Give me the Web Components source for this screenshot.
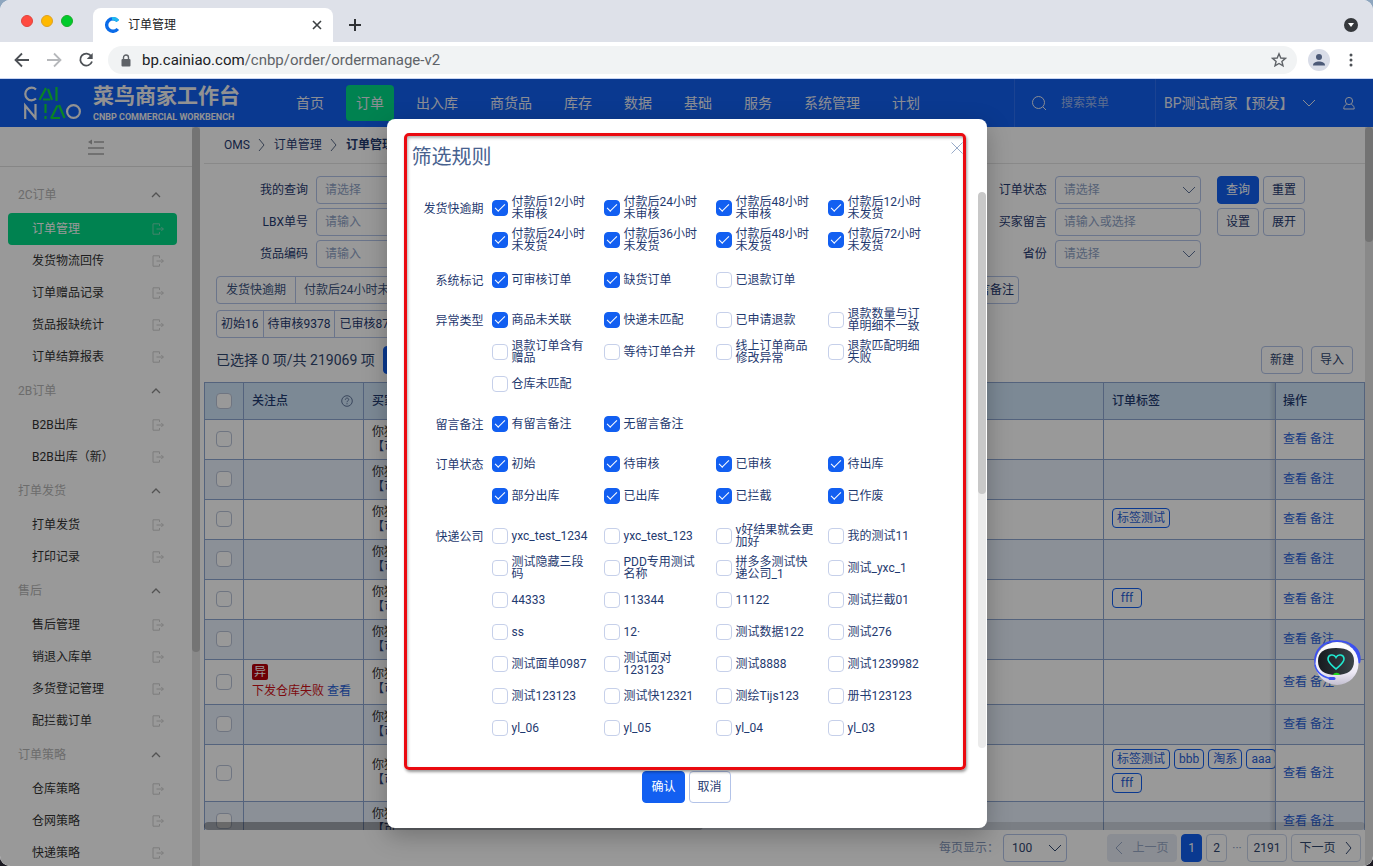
<!DOCTYPE html>
<html lang="zh-CN">
<head>
<meta charset="utf-8">
<title>订单管理</title>
<style>
  html, body { margin: 0; height: 100%; }
  body {
    font: 12px/16px Roboto, "Noto Sans CJK SC", sans-serif;
    color: #1f3a70; overflow: hidden;
    background: linear-gradient(#8ea6bf, #1c1a22);
    --blue: #125ff1; --green: #00d985; --line: #b3c3e8; --grid: #8da6d0;
  }
</style>
</head>
<body>
<browser-window>
  <top-nav></top-nav>
  <side-menu></side-menu>
  <order-page></order-page>
  <filter-dialog slot="overlay"></filter-dialog>
  <help-robot slot="overlay"></help-robot>
</browser-window>

<script>
const BASE = `
  *, *::before { box-sizing: border-box; }
  a { color: inherit; text-decoration: none; }
  button, input, select { font: inherit; color: inherit; margin: 0; }
  button { background: none; border: 0; padding: 0; }
  svg { display: block; fill: none; flex: none; }
`;
function define(name, render) {
  customElements.define(name, class extends HTMLElement {
    connectedCallback() {
      if (this.shadowRoot) return;
      const t = document.createElement('template');
      t.innerHTML = render(this);
      const root = this.attachShadow({ mode: 'open' });
      const base = document.createElement('style');
      base.textContent = BASE;
      root.append(base, t.content.cloneNode(true));
    }
  });
}

/* ---------- line icons ---------- */
const ICONS = {
  down: [14, 14, '<path d="M1 4l6 6 6-6"/>'],
  up: [10, 10, '<path d="M1 7l4-4 4 4" stroke-width="1.3"/>'],
  right: [8, 14, '<path d="M1 1l5 6-5 6"/>'],
  left: [8, 14, '<path d="M7 1L1 7l6 6"/>'],
  search: [16, 16, '<circle cx="7.5" cy="7.5" r="6"/><path d="M12 12l3 3"/>'],
  user: [12, 14, '<circle cx="6" cy="5" r="3.6"/><path d="M3.6 8.4C1.4 9.4.8 10.8.8 13h10.4c0-2.2-.6-3.6-2.8-4.6"/>'],
  exit: [12, 12, '<path d="M7.5 3V.8H1v10.4h6.5V9M4.5 6h7M9.3 4l2 2-2 2"/>'],
  fold: [16, 16, '<path d="M6 3h10M0 9h16M0 15h16" stroke-width="1.4"/><path d="M0 3l4-2.500v5z" fill="currentColor" stroke="none"/>'],
  close: [12, 12, '<path d="M.5 .5l11 11M11.500 .5l-11 11"/>'],
  help: [12, 12, '<circle cx="6" cy="6" r="5.300"/><path d="M4.300 4.700C4.400 2.500 7.800 2.600 7.700 4.700 7.600 5.900 6 5.800 6 7.200M6 8.200v1.100"/>']
};
define('ui-icon', el => {
  const [w, h, body] = ICONS[el.getAttribute('name')];
  return `<style>:host{display:block;flex:none}</style>
    <svg width="${w}" height="${h}" viewBox="0 0 ${w} ${h}" stroke="currentColor" aria-hidden="true">${body}</svg>`;
});

define('ui-button', el => `
  <style>
    :host { display: block; flex: none; }
    button { display: flex; align-items: center; justify-content: center; height: 28px; min-width: 20px;
      padding: 0 8px; border: 1px solid var(--line); border-radius: 4px; white-space: nowrap; }
    :host([tall]) button { height: 32px; }
    :host([primary]) button { background: var(--blue); border-color: var(--blue); color: #fff; }
  </style>
  <button type="button"><slot></slot></button>`);

define('scroll-bar', el => `
  <style>
    :host { display: block; position: absolute; top: 0; bottom: 0; right: 0; width: 8px; background: var(--track, #e6e6e6); border-radius: var(--bar-radius, 0); overflow: hidden; }
    i { display: block; height: var(--thumb, 50%); background: var(--thumb-color, #c4c4c4); border-radius: 4px; }
    :host([across]) { top: auto; left: 0; width: auto; height: 8px; }
    :host([across]) i { height: 8px; width: var(--thumb, 50%); }
  </style><i></i>`);

/* ---------- browser frame ---------- */
define('browser-window', () => `
  <style>
    :host { display: flex; flex-direction: column; height: 100vh; border-radius: 10px; overflow: hidden; background: #fff; }
    .tabs { display: flex; align-items: center; height: 42px; background: #dee1e9; flex: none; padding: 8px 14px 0 21px; color: #3c4043; }
    .lights { display: flex; gap: 8px; width: 72px; padding-bottom: 8px; }
    .lights i { width: 12px; height: 12px; border-radius: 50%; background: #ff4a40; border: 1px solid #e0443e; }
    .lights i:nth-child(2) { background: #ffb900; border-color: #dea123; }
    .lights i:nth-child(3) { background: #00cb2c; border-color: #1aab29; }
    .tab { display: flex; align-items: center; align-self: flex-end; width: 240px; height: 34px; padding: 0 11px; background: #fff; border-radius: 8px 8px 0 0; }
    .tab span { flex: 1; padding-left: 8px; color: #202124; }
    .plus { margin-left: 15px; }
    .spacer { flex: 1; }
    .bar { display: flex; align-items: center; height: 37px; flex: none; padding: 0 14px; border-bottom: 1px solid #c9d5f2; color: #5f6368; }
    .bar > button { width: 16px; margin-right: 16px; }
    .omni { flex: 1; display: flex; align-items: center; height: 28px; margin-left: -2px; padding: 0 10px 0 13px; border-radius: 14px; background: #f1f3f4; font-size: 15px; margin-right: 11px; }
    .omni span { padding-left: 11px; flex: 1; }
    .omni b { font-weight: 400; color: #202124; }
    .menu { margin-left: 13px; }
    .app { position: relative; flex: 1; min-height: 0; display: grid; grid-template: 48px minmax(0, 1fr) / 200px minmax(0, 1fr); background: #fff; }
    ::slotted(top-nav) { grid-column: 1 / -1; }
  </style>
  <header class="tabs">
    <div class="lights"><i></i><i></i><i></i></div>
    <div class="tab">
      <svg width="16" height="16" viewBox="0 0 16 16"><path d="M13.800 4A6.300 6.300 0 1 0 13.800 12" stroke="#0a6be8" stroke-width="3.400"/><path d="M8 1.700A6.300 6.300 0 0 1 13.800 4" stroke="#20b8f0" stroke-width="3.400"/></svg>
      <span>订单管理</span>
      <button aria-label="关闭标签页"><svg width="10" height="10" viewBox="0 0 10 10" stroke="#3c4043" stroke-width="1.600"><path d="M1 1l8 8M9 1L1 9"/></svg></button>
    </div>
    <button class="plus" aria-label="新标签页"><svg width="14" height="14" viewBox="0 0 14 14" stroke="#303236" stroke-width="2"><path d="M7 1v12M1 7h12"/></svg></button>
    <div class="spacer"></div>
    <button aria-label="搜索标签页"><svg width="16" height="16" viewBox="0 0 16 16"><circle cx="8" cy="8" r="7" fill="#35383c"/><path d="M5 6h6l-3 4z" fill="#fff"/></svg></button>
  </header>
  <nav class="bar">
    <button aria-label="后退"><svg width="16" height="16" viewBox="0 0 16 16" stroke="#4d5156" stroke-width="1.800"><path d="M15 8H2M8 1.500L1.500 8 8 14.500"/></svg></button>
    <button aria-label="前进"><svg width="16" height="16" viewBox="0 0 16 16" stroke="#b6b8bb" stroke-width="1.800"><path d="M1 8h13M8 1.500L14.500 8 8 14.500"/></svg></button>
    <button aria-label="刷新"><svg width="16" height="16" viewBox="0 0 16 16"><path d="M13.300 4.300A6 6 0 1 0 14 9.500" stroke="#4d5156" stroke-width="1.800"/><path d="M14.700 1v6H8.800z" fill="#4d5156"/></svg></button>
    <div class="omni">
      <svg width="10" height="13" viewBox="0 0 10 13"><rect x=".5" y="5" width="9" height="7.500" rx="1" fill="#5f6368"/><path d="M2.500 5.500V3.500a2.500 2.500 0 0 1 5 0v2" stroke="#5f6368" stroke-width="1.400"/></svg>
      <span><b>bp.cainiao.com</b>/cnbp/order/ordermanage-v2</span>
      <svg width="16" height="16" viewBox="0 0 16 16" stroke="#5f6368" stroke-width="1.400"><path d="M8 1.800l1.800 4.200 4.600.4-3.500 3 1.100 4.500L8 11.500l-4 2.400 1.100-4.500-3.500-3L6.200 6z"/></svg>
    </div>
    <svg width="22" height="22" viewBox="0 0 22 22"><circle cx="11" cy="11" r="11" fill="#d9dde8"/><circle cx="11" cy="8" r="3" fill="#4c5a78"/><path d="M5 16.500c0-3 3-4 6-4s6 1 6 4z" fill="#4c5a78"/></svg>
    <svg class="menu" width="16" height="16" viewBox="0 0 16 16"><g fill="#4d5156"><circle cx="8" cy="3" r="1.500"/><circle cx="8" cy="8" r="1.500"/><circle cx="8" cy="13" r="1.500"/></g></svg>
  </nav>
  <div class="app"><slot></slot><slot name="overlay"></slot></div>`);

/* ---------- blue top navigation ---------- */
const NAV = ['首页', '订单', '出入库', '商货品', '库存', '数据', '基础', '服务', '系统管理', '计划'];
define('top-nav', () => `
  <style>
    :host { display: flex; background: var(--blue); color: #e8ecf6; font-size: 14px; }
    .logo { display: flex; align-items: center; width: 286px; padding-left: 24px; gap: 12px; color: #f4f4f4; }
    .logo div { display: flex; flex-direction: column; }
    .logo strong { font-size: 21px; line-height: 28px; }
    .logo small { font-size: 9px; line-height: 14px; font-weight: 700; white-space: nowrap; }
    nav { display: flex; align-items: center; gap: 12px; flex: 1; }
    nav a { height: 36px; line-height: 36px; padding: 0 10px; border-radius: 4px; white-space: nowrap; }
    nav a[aria-current] { background: var(--green); }
    .search { display: flex; align-items: center; gap: 14px; width: 141px; padding-left: 16px; border-left: 1px solid #2d71f3; }
    .search input { width: 80px; border: 0; background: none; padding: 0; font-size: 12px; outline: 0; }
    .search input::placeholder { color: #9ab6ee; opacity: 1; }
    .shop { display: flex; align-items: center; width: 218px; padding: 0 18px 0 8px; border-left: 1px solid #2d71f3; white-space: nowrap; }
    .shop button { display: flex; align-items: center; gap: 8px; flex: 1; }
  </style>
  <div class="logo">
    <svg width="57" height="34" viewBox="0 0 57 34" stroke="#f4f4f4" stroke-width="2.200">
      <path d="M12 3.500A6.300 6.300 0 1 0 12 12.500"/>
      <path d="M1.200 33V19.500L11.500 32V18"/><circle cx="49.500" cy="25.500" r="6.400"/>
      <g stroke="#12dc3c"><path d="M15.500 14L22 2M24 3l4 11M19 13.500h7M32.500 1v14"/><path d="M21.500 18v9M21.500 30v3"/><path d="M27 32.500l6.500-13M35 19l5.500 13M27 32h9"/></g>
    </svg>
    <div><strong>菜鸟商家工作台</strong><small>CNBP COMMERCIAL WORKBENCH</small></div>
  </div>
  <nav>${NAV.map((n, i) => `<a href="#"${i === 1 ? ' aria-current="page"' : ''}>${n}</a>`).join('')}</nav>
  <label class="search"><ui-icon name="search"></ui-icon><input type="text" placeholder="搜索菜单" aria-label="搜索菜单"></label>
  <div class="shop"><button type="button">BP测试商家【预发】<ui-icon name="down"></ui-icon></button><ui-icon name="user"></ui-icon></div>`);

/* ---------- left menu ---------- */
const MENU = [
  ['2C订单', ['订单管理', '发货物流回传', '订单赠品记录', '货品报缺统计', '订单结算报表']],
  ['2B订单', ['B2B出库', 'B2B出库（新）']],
  ['打单发货', ['打单发货', '打印记录']],
  ['售后', ['售后管理', '销退入库单', '多货登记管理', '配拦截订单']],
  ['订单策略', ['仓库策略', '仓网策略', '快递策略']]
];
define('side-menu', () => `
  <style>
    :host { display: flex; flex-direction: column; position: relative; overflow: hidden; padding-right: 8px; color: #333; }
    .fold { display: flex; justify-content: center; align-items: center; height: 40px; flex: none; border-bottom: 1px solid #e0e0e0; color: #a8a8a8; }
    nav { padding: 10px 15px 0 8px; }
    h3 { display: flex; align-items: center; justify-content: space-between; height: 36px; margin: 0; padding: 0 16px 0 10px; font-size: 12px; font-weight: 400; color: #b5b5b5; }
    h3 ui-icon { color: #8a8a8a; }
    a { display: flex; align-items: center; justify-content: space-between; height: 32px; padding: 0 13px 0 24px; border-radius: 4px; }
    a ui-icon { color: #d0d0d0; }
    a[aria-current] { background: var(--green); color: #fff; }
    a[aria-current] ui-icon { color: #70dcb4; }
    scroll-bar { --thumb: 71%; --track: #e4e4e4; --thumb-color: #c2c2c2; }
  </style>
  <div class="fold"><button type="button" aria-label="收起菜单"><ui-icon name="fold"></ui-icon></button></div>
  <nav>${MENU.map(([h, items], g) => `<h3>${h}<ui-icon name="up"></ui-icon></h3>` +
    items.map((t, i) => `<a href="#"${g + i ? '' : ' aria-current="page"'}>${t}<ui-icon name="exit"></ui-icon></a>`).join('')).join('')}</nav>
  <scroll-bar></scroll-bar>`);

/* ---------- filter field ---------- */
define('filter-field', el => {
  const ph = el.getAttribute('placeholder'), sel = el.hasAttribute('options');
  return `
  <style>
    :host { display: flex; align-items: center; gap: 8px; }
    label { width: 92px; text-align: right; }
    .box { position: relative; flex: 1; min-width: 0; }
    input, select { display: block; width: 100%; height: 28px; padding: 0 8px; border: 1px solid var(--line); border-radius: 4px; background: transparent; color: #8fa3c6; appearance: none; outline: 0; }
    input::placeholder { color: #8fa3c6; opacity: 1; }
    ui-icon { position: absolute; right: 5px; top: 7px; color: #5f7499; pointer-events: none; }
  </style>
  <label for="f">${el.getAttribute('label')}</label>
  <div class="box">${sel ? `<select id="f"><option>${ph}</option></select><ui-icon name="down"></ui-icon>` : `<input id="f" type="text" placeholder="${ph}">`}</div>`;
});

/* ---------- order table ---------- */
const ROWS = [[], [], ['标签测试'], [], ['fff'], [], 'error', [], ['标签测试', 'bbb', '淘系', 'aaa', 'fff'], []];
define('order-table', () => `
  <style>
    :host { display: block; position: relative; overflow: hidden; flex: 1; min-height: 0; }
    table { width: 100%; table-layout: fixed; border-collapse: separate; border-spacing: 0; border: solid var(--grid); border-width: 1px 0 0 1px; }
    th, td { border: solid var(--grid); border-width: 0 1px 1px 0; padding: 4px 8px; height: 40px; text-align: left; overflow: hidden; }
    th { height: 37px; background: #cfe5f9; font-weight: 500; padding: 0 8px; }
    tr > :first-child { padding: 0 0 1px 11px; }
    .point { display: flex; justify-content: space-between; align-items: center; padding-right: 2px; }
    .point ui-icon { color: #5f7499; }
    tbody tr:nth-child(even) td { background: #e8f0fc; }
    tbody td { background: #fff; }
    input { display: block; appearance: none; width: 16px; height: 16px; border: 1px solid #b9c3d8; border-radius: 4px; background: #fff; }
    .buyer { line-height: 15px; white-space: nowrap; color: #333; }
    .buyer span { display: block; color: #2f4678; }
    .tags { display: flex; flex-wrap: wrap; gap: 4px; padding-bottom: 4px; margin-right: -12px; }
    .tags span { min-width: 30px; height: 20px; line-height: 18px; padding: 0 4px; border: 1px solid var(--blue); border-radius: 4px; color: #2a62d8; text-align: center; }
    tr > :nth-child(4) { border-right: 0; }
    tr > :nth-child(5) { position: relative; overflow: visible; border-left: 1px solid var(--grid); padding: 0 7px 1px; }
    tr > :nth-child(5)::before { content: ""; position: absolute; left: -7px; top: 0; bottom: 0; width: 6px; background: linear-gradient(90deg, transparent, rgba(0,0,0,.13)); }
    td a { color: #2a62d8; }
    .bad { display: block; width: 16px; height: 16px; line-height: 16px; border-radius: 2px; background: #b80008; color: #fff; text-align: center; margin-bottom: 2px; }
    .err { line-height: 18px; color: #d01018; white-space: nowrap; }
    scroll-bar { --thumb: 43%; --track: rgba(0,0,0,.12); --thumb-color: rgba(0,0,0,.22); --bar-radius: 4px; }
  </style>
  <table>
    <colgroup><col style="width:39px"><col style="width:120px"><col><col style="width:171px"><col style="width:90px"></colgroup>
    <thead><tr><th><input type="checkbox" aria-label="全选"></th><th><div class="point">关注点<ui-icon name="help"></ui-icon></div></th><th>买家</th><th>订单标签</th><th>操作</th></tr></thead>
    <tbody>${ROWS.map(r => `<tr><td><input type="checkbox" aria-label="选择订单"></td>
      <td>${r === 'error' ? '<div class="err"><span class="bad">异</span>下发仓库失败 <a href="#">查看</a></div>' : ''}</td>
      <td class="buyer">你猜<span>【可</span></td>
      <td>${r !== 'error' && r.length ? `<div class="tags">${r.map(t => `<span>${t}</span>`).join('')}</div>` : ''}</td>
      <td><a href="#">查看</a> <a href="#">备注</a></td></tr>`).join('')}</tbody>
  </table>
  <scroll-bar across></scroll-bar>`);

/* ---------- paging ---------- */
define('page-bar', () => `
  <style>
    :host { display: flex; align-items: center; justify-content: flex-end; gap: 4px; height: 36px; flex: none; padding-right: 4px; color: #30466f; }
    label { color: #8598bd; }
    .size { position: relative; margin-right: 36px; }
    select { display: block; width: 64px; height: 28px; padding: 0 8px; appearance: none; background: transparent; border: 1px solid var(--line); border-radius: 4px; }
    .size ui-icon { position: absolute; right: 5px; top: 7px; pointer-events: none; }
    button { display: flex; align-items: center; justify-content: center; gap: 9px; height: 28px; min-width: 21px; padding: 0 6px; border: 1px solid #c9d4ea; border-radius: 4px; }
    .prev { background: #e6ebf5; border-color: #e6ebf5; color: #98a8c6; width: 70px; }
    .next { width: 70px; }
    [aria-current] { background: var(--blue); border-color: var(--blue); color: #fff; }
    .dots { width: 12px; text-align: center; color: #8598bd; }
    .last { width: 40px; }
  </style>
  <label for="size">每页显示：</label>
  <div class="size"><select id="size"><option>100</option></select><ui-icon name="down"></ui-icon></div>
  <button class="prev" disabled><ui-icon name="left"></ui-icon>上一页</button>
  <button aria-current="page">1</button><button>2</button><span class="dots">···</span><button class="last">2191</button>
  <button class="next">下一页<ui-icon name="right"></ui-icon></button>`);

/* ---------- order management page ---------- */
define('order-page', () => `
  <style>
    :host { display: flex; flex-direction: column; position: relative; min-width: 0; padding: 0 8px 0 4px; }
    .crumbs { display: flex; align-items: center; gap: 8px; height: 37px; flex: none; padding-left: 20px; border-bottom: 1px solid #e4e4e4; white-space: nowrap; }
    .crumbs b { font-weight: 700; }
    .crumbs ui-icon { color: #5c6b88; }
    .panel { padding: 12px 12px 8px; }
    .filters { display: flex; gap: 16px; }
    .fields { flex: 1; display: grid; grid-template-columns: repeat(4, minmax(0, 1fr)); gap: 4px 0; }
    .fields :nth-child(even) { grid-column: 4; }
    .actions { display: grid; grid-template-columns: 42px 42px; gap: 4px; width: 136px; align-content: start; }
    .quick { display: flex; justify-content: space-between; max-width: 803px; margin-top: 8px; }
    .group { display: flex; align-items: stretch; height: 28px; border: 1px solid var(--line); border-radius: 4px; }
    .group button { padding: 0 4px; }
    .group button + button { border-left: 1px solid var(--line); }
    .due { color: #3c547f; }
    .due button { padding: 0 8px; }
    .due button:first-child { padding: 0 9px; }
    .states { display: flex; margin-top: 6px; }
    .total { display: flex; align-items: center; gap: 8px; margin-top: 8px; font-size: 14px; color: #30466f; }
    .total ui-button { font-size: 12px; }
    .total .push { margin-left: auto; }
    scroll-bar { --thumb: 115px; --track: #e4e4e4; --thumb-color: #c0c0c0; }
  </style>
  <nav class="crumbs"><a href="#">OMS</a><ui-icon name="right"></ui-icon><a href="#">订单管理</a><ui-icon name="right"></ui-icon><b>订单管理</b></nav>
  <div class="panel">
    <div class="filters">
      <div class="fields">
        <filter-field label="我的查询" placeholder="请选择" options></filter-field>
        <filter-field label="订单状态" placeholder="请选择" options></filter-field>
        <filter-field label="LBX单号" placeholder="请输入"></filter-field>
        <filter-field label="买家留言" placeholder="请输入或选择"></filter-field>
        <filter-field label="货品编码" placeholder="请输入"></filter-field>
        <filter-field label="省份" placeholder="请选择" options></filter-field>
      </div>
      <div class="actions">
        <ui-button primary>查询</ui-button><ui-button>重置</ui-button>
        <ui-button>设置</ui-button><ui-button>展开</ui-button>
      </div>
    </div>
    <div class="quick">
      <div class="group due"><button type="button">发货快逾期</button><button type="button">付款后24小时未审核</button></div>
      <div class="group"><button type="button">有留言备注</button></div>
    </div>
    <div class="states"><div class="group"><button type="button">初始16</button><button type="button">待审核9378</button><button type="button">已审核87</button></div></div>
    <div class="total"><span>已选择 0 项/共 219069 项</span><ui-button primary>审核</ui-button><ui-button class="push">新建</ui-button><ui-button>导入</ui-button></div>
  </div>
  <order-table></order-table>
  <page-bar></page-bar>
  <scroll-bar></scroll-bar>`);

/* ---------- dialog ---------- */
define('check-option', el => `
  <style>
    :host { display: flex; align-items: center; height: 32px; }
    label { display: flex; align-items: center; gap: 4px; line-height: 12px; }
    input { appearance: none; flex: none; width: 16px; height: 16px; border: 1px solid #c6d0ea; border-radius: 4px; background: #fff; display: grid; place-items: center; }
    input:checked { background: var(--blue); border-color: var(--blue); }
    input:checked::before { content: ""; width: 10px; height: 5px; margin-top: -3px; border: solid #fff; border-width: 0 0 1px 1px; rotate: -45deg; }
    span { width: 80px; }
  </style>
  <label><input type="checkbox"${el.hasAttribute('checked') ? ' checked' : ''}><span><slot></slot></span></label>`);

define('option-group', el => `
  <style>
    :host { display: grid; grid-template-columns: 72px minmax(0, 1fr); gap: 8px; }
    b { font-weight: 400; line-height: 34px; height: 32px; text-align: right; }
    div { display: grid; grid-template-columns: repeat(4, 112px); }
  </style>
  <b>${el.getAttribute('label')}</b><div><slot></slot></div>`);

/* a leading + marks a ticked option */
const GROUPS = [
  ['发货快逾期', '+付款后12小时未审核 +付款后24小时未审核 +付款后48小时未审核 +付款后12小时未发货 +付款后24小时未发货 +付款后36小时未发货 +付款后48小时未发货 +付款后72小时未发货'],
  ['系统标记', '+可审核订单 +缺货订单 已退款订单'],
  ['异常类型', '+商品未关联 +快递未匹配 已申请退款 退款数量与订单明细不一致 退款订单含有赠品 等待订单合并 线上订单商品修改异常 退款匹配明细失败 仓库未匹配'],
  ['留言备注', '+有留言备注 +无留言备注'],
  ['订单状态', '+初始 +待审核 +已审核 +待出库 +部分出库 +已出库 +已拦截 +已作废'],
  ['快递公司', 'yxc_test_1234 yxc_test_123 v好结果就会更加好 我的测试11 测试隐藏三段码 PDD专用测试名称 拼多多测试快递公司_1 测试_yxc_1 44333 113344 11122 测试拦截01 ss 12· 测试数据122 测试276 测试面单0987 测试面对123123 测试8888 测试1239982 测试123123 测试快12321 测绘Tijs123 册书123123 yl_06 yl_05 yl_04 yl_03']
];
define('filter-dialog', () => `
  <style>
    :host { position: absolute; inset: 0; display: flex; justify-content: center; align-items: flex-start; padding-top: 40px; background: rgba(0,0,0,.4); }
    .dialog { position: relative; width: 600px; padding: 25px 0; background: #fff; border-radius: 8px; box-shadow: 0 8px 24px rgba(0,0,0,.25); }
    header { display: flex; justify-content: space-between; align-items: flex-start; height: 48px; padding: 0 24px 0 25px; color: #98abc9; }
    header button { margin-top: -2px; }
    h2 { margin: 0; font-size: 20px; line-height: 26px; font-weight: 400; color: #48628f; }
    .list { position: relative; padding: 0 46px 4px 25px; display: grid; gap: 8px; }
    footer { display: flex; justify-content: center; gap: 4px; padding-top: 23px; }
    .mark { position: absolute; left: 17px; right: 21px; top: 14px; bottom: 58px; border: 3px solid #ea0a10; border-radius: 5px; box-shadow: 1px 2px 3px rgba(0,0,0,.4), inset 1px 2px 3px rgba(0,0,0,.3); pointer-events: none; }
    scroll-bar { --thumb: 302px; --track: #ebebeb; --thumb-color: #c8c8c8; --bar-radius: 4px; right: 1px; }
  </style>
  <section class="dialog" role="dialog" aria-labelledby="t">
    <header><h2 id="t">筛选规则</h2><button type="button" aria-label="关闭"><ui-icon name="close"></ui-icon></button></header>
    <div class="list">${GROUPS.map(([l, o]) => `<option-group label="${l}">${o.split(' ').map(t =>
      t[0] === '+' ? `<check-option checked>${t.slice(1)}</check-option>` : `<check-option>${t}</check-option>`).join('')}</option-group>`).join('')}
      <scroll-bar></scroll-bar></div>
    <footer><ui-button tall primary>确认</ui-button><ui-button tall>取消</ui-button></footer>
    <div class="mark"></div>
  </section>`);

/* ---------- floating assistant ---------- */
define('help-robot', () => `
  <style>:host { position: absolute; right: 12px; bottom: 180px; } button { display: block; }</style>
  <button type="button" aria-label="客服助手">
  <svg width="48" height="46" viewBox="0 0 48 46">
    <defs><linearGradient id="h" x1="0" y1="0" x2="0" y2="1"><stop offset="0" stop-color="#fff"/><stop offset=".7" stop-color="#eeeaf6"/><stop offset="1" stop-color="#c3bfd0"/></linearGradient>
    <linearGradient id="s"><stop offset="0" stop-color="#161a1e"/><stop offset="1" stop-color="#3a4248"/></linearGradient></defs>
    <path d="M3 27C-1 10 11 1 24 1s25 8 22 22" stroke="#3c50f0" stroke-width="2"/>
    <path d="M36 3c8 3 13 10 11 20l-4 1z" fill="#3c50f0"/>
    <ellipse cx="24" cy="23.500" rx="21.500" ry="21.500" fill="url(#h)"/>
    <path d="M5 21c0-9 6-13 18-13s18 4 18 13-6 14-18 14S5 30 5 21z" fill="url(#s)"/>
    <path d="M23 29c-3-3-8-6-8-10 0-4.500 6-5.500 8-1.500 2-4 8-3 8 1.500 0 4-5 7-8 10z" stroke="#20e8d0" stroke-width="1.600"/>
    <path d="M20 35c1-3 6-3 7 0z" fill="#20d820"/>
    <path d="M2 25c2 9 8 13 19 14" stroke="#4058f4" stroke-width="1.500"/><path d="M17 38.500h4" stroke="#3c50f0" stroke-width="3" stroke-linecap="round"/>
  </svg></button>`);
</script>
</body>
</html>
